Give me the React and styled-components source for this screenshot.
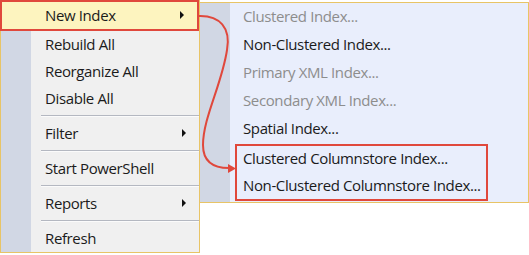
import React from "react";
import styled, { createGlobalStyle } from "styled-components";

const GlobalStyle = createGlobalStyle`
  html, body {
    margin: 0;
    padding: 0;
    background: #ffffff;
  }
  body {
    font-family: "Open Sans", "Noto Sans", sans-serif;
  }
`;

const mainItems = [
  { type: "item", label: "Rebuild All" },
  { type: "item", label: "Reorganize All" },
  { type: "item", label: "Disable All" },
  { type: "sep" },
  { type: "item", label: "Filter", sub: true },
  { type: "sep" },
  { type: "item", label: "Start PowerShell" },
  { type: "sep" },
  { type: "item", label: "Reports", sub: true },
  { type: "sep" },
  { type: "item", label: "Refresh" },
];

const subItems = [
  { label: "Clustered Index...", disabled: true },
  { label: "Non-Clustered Index..." },
  { label: "Primary XML Index...", disabled: true },
  { label: "Secondary XML Index...", disabled: true },
  { label: "Spatial Index..." },
];

const columnstoreItems = [
  { label: "Clustered Columnstore Index..." },
  { label: "Non-Clustered Columnstore Index..." },
];

const App = () => {
  return (
    <>
      <GlobalStyle />
      <Stage>
        <Menu>
          <ActiveItem>
            <Label>New Index</Label>
            <Caret />
          </ActiveItem>
          {mainItems.map((it, i) =>
            it.type === "sep" ? (
              <Separator key={i} />
            ) : (
              <Item key={i}>
                <Label>{it.label}</Label>
                {it.sub && <Caret />}
              </Item>
            )
          )}
        </Menu>
        <SubMenu>
          {subItems.map((it) => (
            <SubItem key={it.label} $disabled={it.disabled}>
              {it.label}
            </SubItem>
          ))}
          <Callout>
            {columnstoreItems.map((it) => (
              <CalloutItem key={it.label}>{it.label}</CalloutItem>
            ))}
          </Callout>
        </SubMenu>
        <Connector width="529" height="255" viewBox="0 0 529 255">
          <path
            d="M198 16 C 220 15, 231 28, 227 50 C 222 84, 203 118, 203 145 C 203 161, 213 168, 229 168"
            fill="none"
            stroke="#e0483c"
            strokeWidth="2"
          />
          <path d="M236 168.5 L 228 164 L 228 173 Z" fill="#e0483c" />
        </Connector>
      </Stage>
    </>
  );
};

export default App;

const Stage = styled.div`
  position: relative;
  width: 529px;
  height: 255px;
  display: flex;
  align-items: flex-start;
  font-size: 15px;
  letter-spacing: -0.38px;
  color: #1b1b1b;
`;

const Menu = styled.div`
  width: 200px;
  box-sizing: border-box;
  border: 1px solid #e8c466;
  background: linear-gradient(to right, #d1d7e4 0 30px, #f0f0f0 30px);
  display: flex;
  flex-direction: column;
`;

const Item = styled.div`
  height: 27px;
  box-sizing: border-box;
  display: flex;
  align-items: center;
  justify-content: space-between;
  padding: 0 13px 2px 44px;
`;

const ActiveItem = styled(Item)`
  height: 31px;
  margin: -1px 0 0 -1px;
  width: 199px;
  border: 2px solid #e0483c;
  background: #fdf4bf;
  padding: 0 13px 1px 43px;
`;

const Label = styled.span`
  white-space: nowrap;
`;

const Caret = styled.span`
  width: 0;
  height: 0;
  border-left: 4px solid #111;
  border-top: 4px solid transparent;
  border-bottom: 4px solid transparent;
`;

const Separator = styled.div`
  height: 8px;
  margin-left: 40px;
  display: flex;
  align-items: center;

  &::before {
    content: "";
    flex: 1;
    height: 1px;
    border-bottom: 1px solid #fbfbfb;
    background: #b4b8c1;
  }
`;

const SubMenu = styled.div`
  width: 330px;
  margin: 2px 0 0 -1px;
  box-sizing: border-box;
  border: 1px solid #e8c466;
  background: linear-gradient(to right, #d1d7e4 0 30px, #e9eefc 30px);
  display: flex;
  flex-direction: column;
`;

const SubItem = styled.div`
  height: 28px;
  box-sizing: border-box;
  display: flex;
  align-items: center;
  padding: 0 0 2px 43px;
  white-space: nowrap;
  color: ${(p) => (p.$disabled ? "#8d8d8d" : "#1b1b1b")};
`;

const Callout = styled.div`
  margin: 1px 0 1px 35px;
  width: 253px;
  box-sizing: border-box;
  border: 2px solid #e0483c;
  display: flex;
  flex-direction: column;
`;

const CalloutItem = styled.div`
  height: 26.5px;
  box-sizing: border-box;
  display: flex;
  align-items: center;
  padding: 0 0 2px 6px;
  white-space: nowrap;
`;

const Connector = styled.svg`
  position: absolute;
  left: 0;
  top: 0;
  pointer-events: none;
`;
